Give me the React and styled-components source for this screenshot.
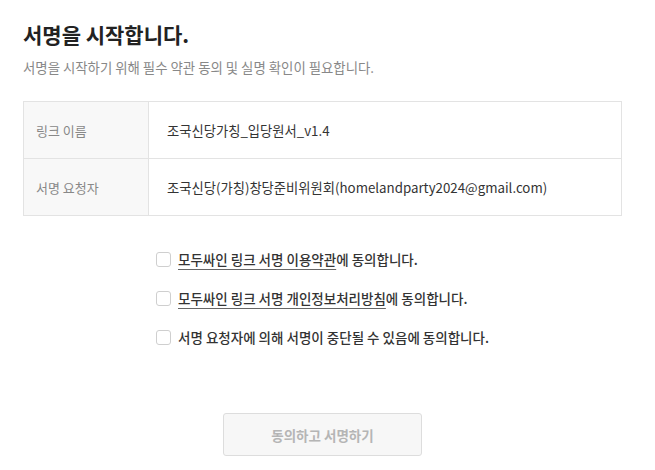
import styled, { createGlobalStyle } from "styled-components";
import { useState } from "react";

const GlobalStyle = createGlobalStyle`
  body {
    margin: 0;
    background: #ffffff;
    font-family: "Noto Sans CJK KR", "Noto Sans", sans-serif;
    color: #222222;
  }
`;

const terms = [
  { link: "모두싸인 링크 서명 이용약관", rest: "에 동의합니다." },
  { link: "모두싸인 링크 서명 개인정보처리방침", rest: "에 동의합니다." },
  { link: null, rest: "서명 요청자에 의해 서명이 중단될 수 있음에 동의합니다." },
];

const App = () => {
  const [checked, setChecked] = useState([false, false, false]);
  const allChecked = checked.every(Boolean);

  const toggle = (i) =>
    setChecked((prev) => prev.map((v, idx) => (idx === i ? !v : v)));

  return (
    <>
      <GlobalStyle />
      <Page>
        <Title>서명을 시작합니다.</Title>
        <Subtitle>
          서명을 시작하기 위해 필수 약관 동의 및 실명 확인이 필요합니다.
        </Subtitle>
        <InfoTable>
          <Row>
            <Label>링크 이름</Label>
            <Value>조국신당가칭_입당원서_v1.4</Value>
          </Row>
          <Row last>
            <Label>서명 요청자</Label>
            <Value>조국신당(가칭)창당준비위원회(homelandparty2024@gmail.com)</Value>
          </Row>
        </InfoTable>
        <Agreements>
          {terms.map((t, i) => (
            <Agreement key={i} onClick={() => toggle(i)}>
              <Box checked={checked[i]} />
              <span>
                {t.link && <TermLink>{t.link}</TermLink>}
                {t.rest}
              </span>
            </Agreement>
          ))}
        </Agreements>
        <ButtonRow>
          <SignButton disabled={!allChecked}>동의하고 서명하기</SignButton>
        </ButtonRow>
      </Page>
    </>
  );
};

export default App;

const Page = styled.div`
  width: 599px;
  padding: 20px 0 0 23px;
  display: flex;
  flex-direction: column;
`;

const Title = styled.h1`
  margin: 0;
  font-size: 21px;
  font-weight: 700;
  line-height: 28px;
  color: #222222;
`;

const Subtitle = styled.p`
  margin: 10px 0 0;
  font-size: 13.4px;
  line-height: 18px;
  color: #888888;
`;

const InfoTable = styled.div`
  margin-top: 25px;
  border: 1px solid #e3e3e3;
`;

const Row = styled.div`
  display: flex;
  height: 56px;
  border-bottom: ${(p) => (p.last ? "none" : "1px solid #e3e3e3")};
`;

const Label = styled.div`
  width: 125px;
  flex-shrink: 0;
  background: #f8f8f8;
  border-right: 1px solid #e3e3e3;
  display: flex;
  align-items: center;
  padding-left: 12px;
  box-sizing: border-box;
  font-size: 13px;
  color: #888888;
`;

const Value = styled.div`
  display: flex;
  align-items: center;
  padding-left: 18px;
  font-size: 13.3px;
  color: #333333;
`;

const Agreements = styled.div`
  margin-top: 33px;
  align-self: center;
  display: flex;
  flex-direction: column;
  gap: 19px;
`;

const Agreement = styled.label`
  display: flex;
  align-items: center;
  gap: 7px;
  font-size: 13.5px;
  font-weight: 500;
  color: #333333;
  cursor: pointer;
  line-height: 20px;
`;

const Box = styled.span`
  width: 15px;
  height: 15px;
  box-sizing: border-box;
  border: 1px solid #cfcfcf;
  border-radius: 3px;
  background: ${(p) => (p.checked ? "#3a7afe" : "#ffffff")};
`;

const TermLink = styled.span`
  text-decoration: underline;
  text-underline-offset: 4px;
  text-decoration-color: #666666;
`;

const ButtonRow = styled.div`
  margin-top: 66px;
  display: flex;
  justify-content: center;
`;

const SignButton = styled.button`
  width: 199px;
  height: 43px;
  border: 1px solid #dddddd;
  border-radius: 3px;
  background: #f7f7f7;
  color: ${(p) => (p.disabled ? "#b5b5b5" : "#333333")};
  font-family: "Noto Sans CJK KR", "Noto Sans", sans-serif;
  font-size: 13.5px;
  font-weight: 700;
  cursor: ${(p) => (p.disabled ? "default" : "pointer")};
`;
